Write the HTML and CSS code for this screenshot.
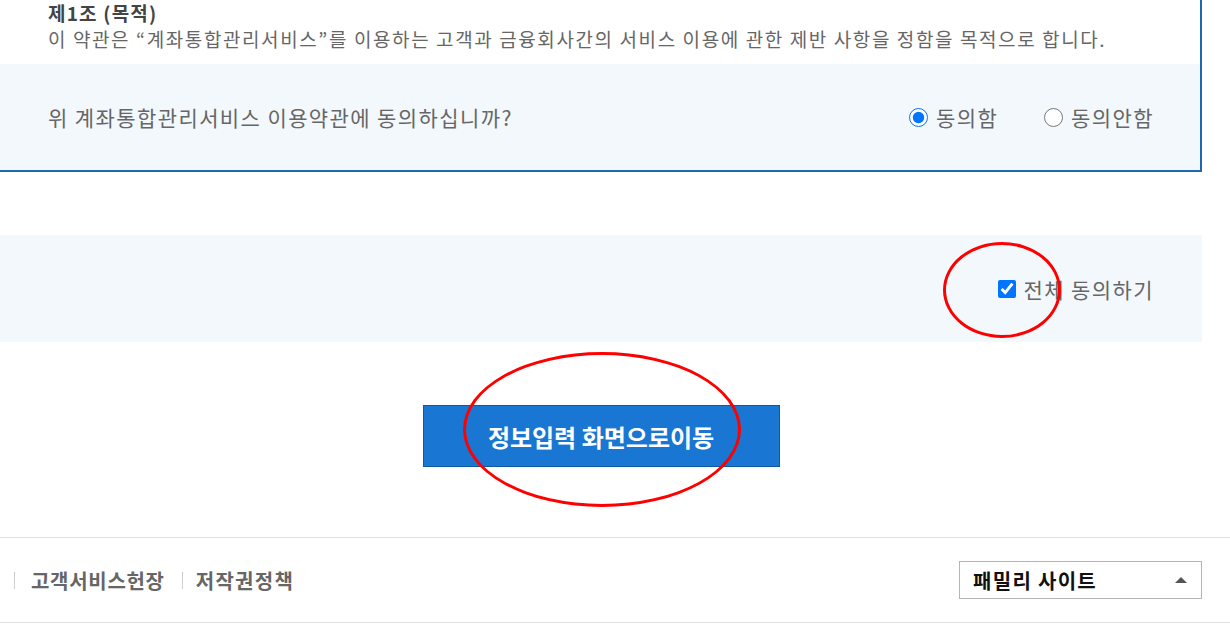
FILE: index.html
```html
<!DOCTYPE html>
<html>
<head>
	<meta http-equiv="Content-Type" content="text/html; charset=utf-8" />
	<meta name="viewport" content="width=device-width, initial-scale=1">
<title>계좌통합관리서비스 약관동의</title>
<link rel="stylesheet" href="styles.css">
</head>
<body>

<div id="wrap">

	<div class="terms">
		<div class="termsTxt">
			<h4>제1조 (목적)</h4>
			<p>이 약관은 “계좌통합관리서비스”를 이용하는 고객과 금융회사간의 서비스 이용에 관한 제반 사항을 정함을 목적으로 합니다.</p>
		</div>
		<div class="agreeRow">
			<span class="q">위 계좌통합관리서비스 이용약관에 동의하십니까?</span>
			<div class="opts">
				<label><input type="radio" name="agr1" checked> 동의함</label>
				<label><input type="radio" name="agr1"> 동의안함</label>
			</div>
		</div>
	</div>

	<div class="allRow">
		<label><input type="checkbox" checked> 전체 동의하기</label>
	</div>

	<div class="btnArea">
		<button class="goBtn">정보입력 화면으로이동</button>
	</div>

	<!-- red marks -->
	<div class="mark m1"></div>
	<div class="mark m2"></div>
</div>

<div id="foot">
	<div class="footIn">
		<div class="links">
			<span class="bar"></span><a href="#">고객서비스헌장</a>
			<span class="bar"></span><a href="#" class="last">저작권정책</a>
		</div>
		<div class="family">
			패밀리 사이트
			<span class="arr"></span>
		</div>
	</div>
</div>

</body>
</html>
```

FILE: styles.css
```css
body{
	padding:0px;
	margin:0px;
	background:#fff;
	font-family:"Noto Sans CJK KR","Noto Sans",sans-serif;
	color:#666;
	overflow:hidden;
}
#wrap{
	position:relative;
	width:1202px;
}
.terms{
	border-right:2px solid #1f68ad;
	border-bottom:2px solid #1f68ad;
	box-sizing:border-box;
}
.termsTxt{
	padding:2px 48px 0;
	height:62px;
}
.termsTxt h4{
	margin:0;
	font-size:19px;
	letter-spacing:1.2px;
	line-height:22px;
	color:#444;
	font-weight:bold;
}
.termsTxt p{
	margin:3px 0 0;
	font-size:19px;
	letter-spacing:1.6px;
	line-height:24px;
}
.agreeRow{
	background:#f2f8fc;
	height:106px;
	display:flex;
	align-items:center;
	justify-content:space-between;
	padding:0 46px 0 48px;
	font-size:21px;
	letter-spacing:1.4px;
}
.opts{
	display:flex;
	gap:46px;
}
label{
	display:flex;
	align-items:center;
	gap:8px;
}
input{
	margin:0;
	width:19px;
	height:19px;
}
input[type=checkbox]{
	width:18px;
	height:18px;
}
.allRow{
	margin-top:63px;
	background:#f2f8fc;
	height:107px;
	display:flex;
	align-items:center;
	justify-content:flex-end;
	padding-right:48px;
	font-size:21px;
	letter-spacing:1.4px;
}
.btnArea{
	display:flex;
	justify-content:center;
	padding:63px 0 70px;
}
.goBtn{
	width:357px;
	height:62px;
	background:#1976d2;
	border:1px solid #0d5a9e;
	color:#fff;
	font-family:inherit;
	font-size:24px;
	font-weight:bold;
	padding:0;
}
.mark{
	position:absolute;
	border:3px solid #f00;
	border-radius:50%;
	box-sizing:border-box;
}
.m1{
	left:943px;
	top:242px;
	width:118px;
	height:96px;
}
.m2{
	left:463px;
	top:352px;
	width:278px;
	height:155px;
}
#foot{
	border-top:1px solid #e2e2e2;
	border-bottom:1px solid #e2e2e2;
}
.footIn{
	width:1202px;
	height:84px;
	display:flex;
	align-items:center;
	justify-content:space-between;
}
.links{
	display:flex;
	align-items:center;
	padding-left:14px;
}
.links a{
	color:#666;
	font-weight:bold;
	font-size:20px;
	letter-spacing:0.7px;
	text-decoration:none;
	margin:0 17px 0 16px;
}
.links a.last{
	margin-left:13px;
	letter-spacing:1.3px;
}
.bar{
	width:1px;
	height:17px;
	background:#ccc;
}
.family{
	width:243px;
	height:38px;
	box-sizing:border-box;
	border:1px solid #b5b5b5;
	display:flex;
	align-items:center;
	justify-content:space-between;
	padding:0 14px 0 13px;
	font-size:20px;
	letter-spacing:1.3px;
	font-weight:bold;
	color:#111;
}
.arr{
	width:0;
	height:0;
	border-left:6px solid transparent;
	border-right:6px solid transparent;
	border-bottom:6px solid #555;
}
```
